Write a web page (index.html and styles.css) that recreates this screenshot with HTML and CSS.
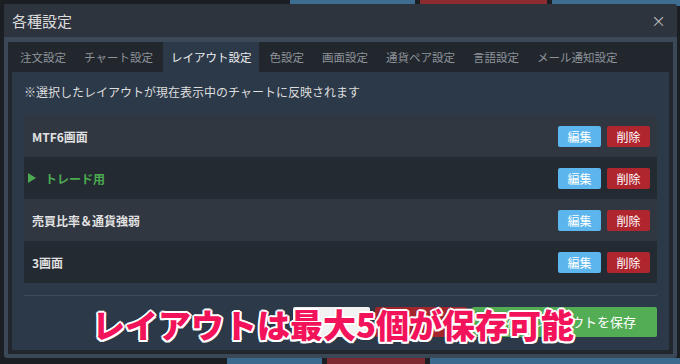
FILE: index.html
```html
<!DOCTYPE html>
<html lang="ja">
<head>
  <meta charset="UTF-8">
  <title>各種設定</title>
  <link rel="stylesheet" href="styles.css">
</head>
<body>
  <div class="app">
    <div class="tiles top">
      <div class="tile blank"></div>
      <div class="tile blue"></div>
      <div class="tile red"></div>
      <div class="tile blue wide"></div>
    </div>
    <div class="tiles bottom">
      <div class="tile blank2"></div>
      <div class="tile blue2"></div>
      <div class="tile red2"></div>
      <div class="tile blue2 wide"></div>
    </div>

    <div class="modal">
      <div class="modal-header">
        <span class="modal-title">各種設定</span>
        <span class="close">&times;</span>
      </div>
      <div class="modal-body">
        <ul class="tabs">
          <li>注文設定</li>
          <li>チャート設定</li>
          <li class="active">レイアウト設定</li>
          <li>色設定</li>
          <li>画面設定</li>
          <li>通貨ペア設定</li>
          <li>言語設定</li>
          <li>メール通知設定</li>
        </ul>
        <div class="panel">
          <p class="note">※選択したレイアウトが現在表示中のチャートに反映されます</p>
          <div class="layout-list">
            <div class="layout-row">
              <span class="layout-name">MTF6画面</span>
              <span class="btn edit">編集</span>
              <span class="btn del">削除</span>
            </div>
            <div class="layout-row current">
              <span class="layout-name"><span class="arrow"></span>トレード用</span>
              <span class="btn edit">編集</span>
              <span class="btn del">削除</span>
            </div>
            <div class="layout-row">
              <span class="layout-name">売買比率＆通貨強弱</span>
              <span class="btn edit">編集</span>
              <span class="btn del">削除</span>
            </div>
            <div class="layout-row">
              <span class="layout-name">3画面</span>
              <span class="btn edit">編集</span>
              <span class="btn del">削除</span>
            </div>
          </div>
          <div class="footer">
            <span class="fbtn light"></span>
            <span class="fbtn danger"></span>
            <span class="fbtn save">現在のレイアウトを保存</span>
          </div>
        </div>
      </div>
    </div>

    <div class="caption">レイアウトは最大5個が保存可能</div>
  </div>
</body>
</html>
```

FILE: styles.css
```css
/* 各種設定 - layout tab */
body {
  margin: 0;
  padding: 0;
  background-color: #1b1e23;
  font-family: "Noto Sans CJK JP", "Noto Sans", sans-serif;
}

.app {
  position: relative;
  width: 680px;
  height: 364px;
  overflow: hidden;
}

.tiles {
  display: flex;
  gap: 5px;
  height: 6px;
}

.tiles.bottom {
  margin-top: 352px;
}

.tile.blank { width: 285px; }
.tile.blue { width: 125px; background-color: #3e6d92; }
.tile.red { width: 127px; background-color: #8c2c31; }
.tile.wide { flex: 1; }
.tile.blank2 { width: 222px; }
.tile.blue2 { width: 95px; background-color: #3b6a8e; }
.tile.red2 { width: 98px; background-color: #7a2a30; }

.modal {
  position: absolute;
  top: 4px;
  left: 4px;
  width: 673px;
  height: 354px;
  background-color: #3b4858;
  border-radius: 3px;
  display: flex;
  flex-direction: column;
}

.modal-header {
  height: 33px;
  background-color: #2e343e;
  border-radius: 3px 3px 0 0;
  display: flex;
  align-items: center;
  justify-content: space-between;
  padding: 0 11px 0 8px;
}

.modal-title {
  color: #dcdcdc;
  font-size: 15px;
}

.close {
  color: #c8c8c8;
  font-size: 18px;
  font-family: "DejaVu Sans", sans-serif;
  font-weight: 300;
}

.modal-body {
  flex: 1;
  margin: 5px 4px 4px 4px;
  background-color: #22272e;
  padding: 0 4px 4px 4px;
  display: flex;
  flex-direction: column;
}

.tabs {
  list-style: none;
  margin: 0;
  padding: 0;
  height: 30px;
  display: flex;
}

.tabs li {
  flex: none;
  white-space: nowrap;
  color: #8e939a;
  font-size: 11.5px;
  line-height: 30px;
  padding: 0 8px;
  margin-right: 2px;
}

.tabs li.active {
  background-color: #2c3949;
  color: #eeeeee;
}

.panel {
  flex: 1;
  background-color: #2c3949;
  padding: 0 12px;
}

.note {
  margin: 0;
  padding-top: 11px;
  height: 34px;
  box-sizing: border-box;
  color: #dddddd;
  font-size: 12px;
}

.layout-list {
  margin-top: 9px;
}

.layout-row {
  height: 42px;
  display: flex;
  align-items: center;
  padding: 0 7px 0 8px;
  background-color: #313741;
}

.layout-row:nth-child(even) {
  background-color: #242a32;
}

.layout-name {
  flex: 1;
  color: #e2e2e2;
  font-size: 12px;
  font-weight: bold;
  display: flex;
  align-items: center;
}

.layout-row.current {
  padding-left: 4px;
}

.layout-row.current .layout-name {
  color: #4caa50;
}

.arrow {
  width: 0;
  height: 0;
  border-top: 5px solid transparent;
  border-bottom: 5px solid transparent;
  border-left: 8px solid #4caa50;
  margin-right: 9px;
}

.btn {
  width: 43px;
  height: 21px;
  line-height: 21px;
  text-align: center;
  color: #ffffff;
  font-size: 12px;
  border-radius: 2px;
  margin-left: 6px;
}

.btn.edit {
  background-color: #5cb6ed;
}

.btn.del {
  background-color: #b0262f;
}

.footer {
  margin-top: 12px;
  border-top: 1px solid #3e4c5e;
  padding-top: 11px;
  display: flex;
  justify-content: flex-end;
  gap: 5px;
}

.fbtn {
  height: 30px;
  line-height: 30px;
  font-size: 13px;
  text-align: center;
  color: #ffffff;
  border-radius: 2px;
}

.fbtn.light {
  width: 77px;
  background-color: #f2f2f2;
  color: #333333;
}

.fbtn.danger {
  width: 92px;
  background-color: #a3262d;
}

.fbtn.save {
  width: 185px;
  background-color: #52ad55;
}

.caption {
  position: absolute;
  left: 92px;
  top: 300px;
  font-size: 33px;
  font-weight: 900;
  color: #f3135a;
  text-shadow:
    2px 0 0 #ffffff, -2px 0 0 #ffffff, 0 2px 0 #ffffff, 0 -2px 0 #ffffff,
    1.5px 1.5px 0 #ffffff, -1.5px 1.5px 0 #ffffff, 1.5px -1.5px 0 #ffffff, -1.5px -1.5px 0 #ffffff,
    0 0 3px rgba(0, 0, 0, 0.4);
}
```
